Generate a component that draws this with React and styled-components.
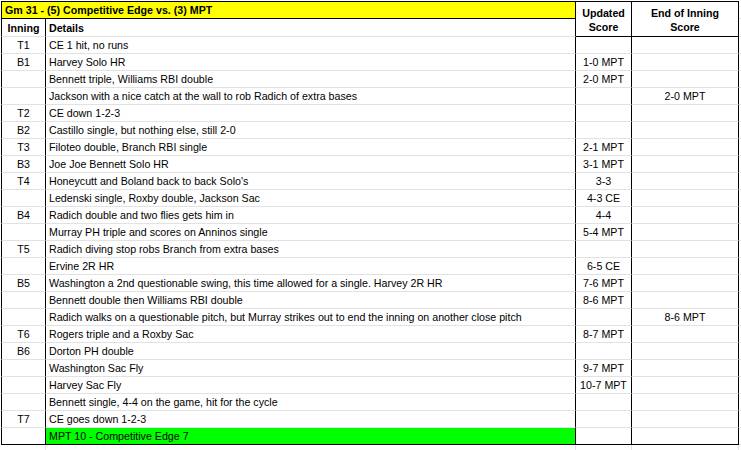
import React from "react";
import styled, { createGlobalStyle, css } from "styled-components";

const GlobalStyle = createGlobalStyle`
  html, body { margin: 0; padding: 0; background: #fff; }
  body { font-family: "Liberation Sans", Arial, sans-serif; color: #000; }
`;

const BLACK = "#000";
const GRAY = "#e2e2e2";

const Sheet = styled.div`
  display: grid;
  grid-template-columns: 45px 530px 56px 107px 1fr;
  grid-template-rows: 18px 18px repeat(24, 17px) 8px;
  padding: 1px 0 0 1px;
  width: 741px;
  box-sizing: border-box;
  overflow: hidden;
`;

const Cell = styled.div`
  box-sizing: border-box;
  grid-column: ${(p) => p.$col};
  grid-row: ${(p) => p.$row};
  display: flex;
  align-items: center;
  justify-content: ${(p) => (p.$align === "center" ? "center" : "flex-start")};
  text-align: ${(p) => (p.$align === "center" ? "center" : "left")};
  padding: 0 3px;
  font-size: 10.67px;
  line-height: 14px;
  white-space: nowrap;
  overflow: hidden;
  border-right: 1px solid ${BLACK};
  border-bottom: 1px solid ${(p) => (p.$lastRow ? BLACK : GRAY)};
  ${(p) => p.$first && css`border-left: 1px solid ${BLACK};`}
  ${(p) => p.$bg && css`background: ${p.$bg};`}
  ${(p) => p.$bold && css`font-weight: bold;`}
`;

const TitleCell = styled(Cell)`
  border-top: 1px solid ${BLACK};
  border-left: 1px solid ${BLACK};
  border-bottom: 1px solid ${BLACK};
  background: #ffff00;
  font-weight: bold;
`;

const ScoreHeader = styled(Cell)`
  border-top: 1px solid ${BLACK};
  border-bottom: 1px solid ${BLACK};
  font-weight: bold;
  white-space: normal;
  padding-top: 1px;
`;

const Ghost = styled.div`
  box-sizing: border-box;
  grid-column: 5;
  grid-row: ${(p) => p.$row};
  border-bottom: 1px solid ${GRAY};
`;

const GhostFoot = styled.div`
  box-sizing: border-box;
  grid-column: ${(p) => p.$col};
  grid-row: 27;
  border-right: 1px solid ${GRAY};
`;

const rows = [
  ["T1", "CE 1 hit, no runs", "", ""],
  ["B1", "Harvey Solo HR", "1-0 MPT", ""],
  ["", "Bennett triple, Williams RBI double", "2-0 MPT", ""],
  ["", "Jackson with a nice catch at the wall to rob Radich of extra bases", "", "2-0 MPT"],
  ["T2", "CE down 1-2-3", "", ""],
  ["B2", "Castillo single, but nothing else, still 2-0", "", ""],
  ["T3", "Filoteo double, Branch RBI single", "2-1 MPT", ""],
  ["B3", "Joe Joe Bennett Solo HR", "3-1 MPT", ""],
  ["T4", "Honeycutt and Boland back to back Solo's", "3-3", ""],
  ["", "Ledenski single, Roxby double, Jackson Sac", "4-3 CE", ""],
  ["B4", "Radich double and two flies gets him in", "4-4", ""],
  ["", "Murray PH triple and scores on Anninos single", "5-4 MPT", ""],
  ["T5", "Radich diving stop robs Branch from extra bases", "", ""],
  ["", "Ervine 2R HR", "6-5 CE", ""],
  ["B5", "Washington a 2nd questionable swing, this time allowed for a single. Harvey 2R HR", "7-6 MPT", ""],
  ["", "Bennett double then Williams RBI double", "8-6 MPT", ""],
  ["", "Radich walks on a questionable pitch, but Murray strikes out to end the inning on another close pitch", "", "8-6 MPT"],
  ["T6", "Rogers triple and a Roxby Sac", "8-7 MPT", ""],
  ["B6", "Dorton PH double", "", ""],
  ["", "Washington Sac Fly", "9-7 MPT", ""],
  ["", "Harvey Sac Fly", "10-7 MPT", ""],
  ["", "Bennett single, 4-4 on the game, hit for the cycle", "", ""],
  ["T7", "CE goes down 1-2-3", "", ""],
  ["", "MPT 10 - Competitive Edge 7", "", "", "#00ff00"],
];

export default function App() {
  return (
    <>
      <GlobalStyle />
      <Sheet>
        <TitleCell $col="1 / span 2" $row="1">Gm 31 - (5) Competitive Edge vs. (3) MPT</TitleCell>
        <ScoreHeader $col="3" $row="1 / span 2" $align="center">Updated<br />Score</ScoreHeader>
        <ScoreHeader $col="4" $row="1 / span 2" $align="center">End of Inning<br />Score</ScoreHeader>
        <Ghost $row="1" />
        <Cell $col="1" $row="2" $first $align="center" $bold>Inning</Cell>
        <Cell $col="2" $row="2" $bold>Details</Cell>
        <Ghost $row="2" />
        {rows.map((r, i) => {
          const last = i === rows.length - 1;
          const row = String(i + 3);
          return (
            <React.Fragment key={i}>
              <Cell $col="1" $row={row} $first $align="center" $lastRow={last}>{r[0]}</Cell>
              <Cell $col="2" $row={row} $lastRow={last} $bg={r[4]}>{r[1]}</Cell>
              <Cell $col="3" $row={row} $align="center" $lastRow={last}>{r[2]}</Cell>
              <Cell $col="4" $row={row} $align="center" $lastRow={last}>{r[3]}</Cell>
              <Ghost $row={row} />
            </React.Fragment>
          );
        })}
        <GhostFoot $col="1" />
        <GhostFoot $col="2" />
        <GhostFoot $col="3" />
        <GhostFoot $col="4" />
      </Sheet>
    </>
  );
}
